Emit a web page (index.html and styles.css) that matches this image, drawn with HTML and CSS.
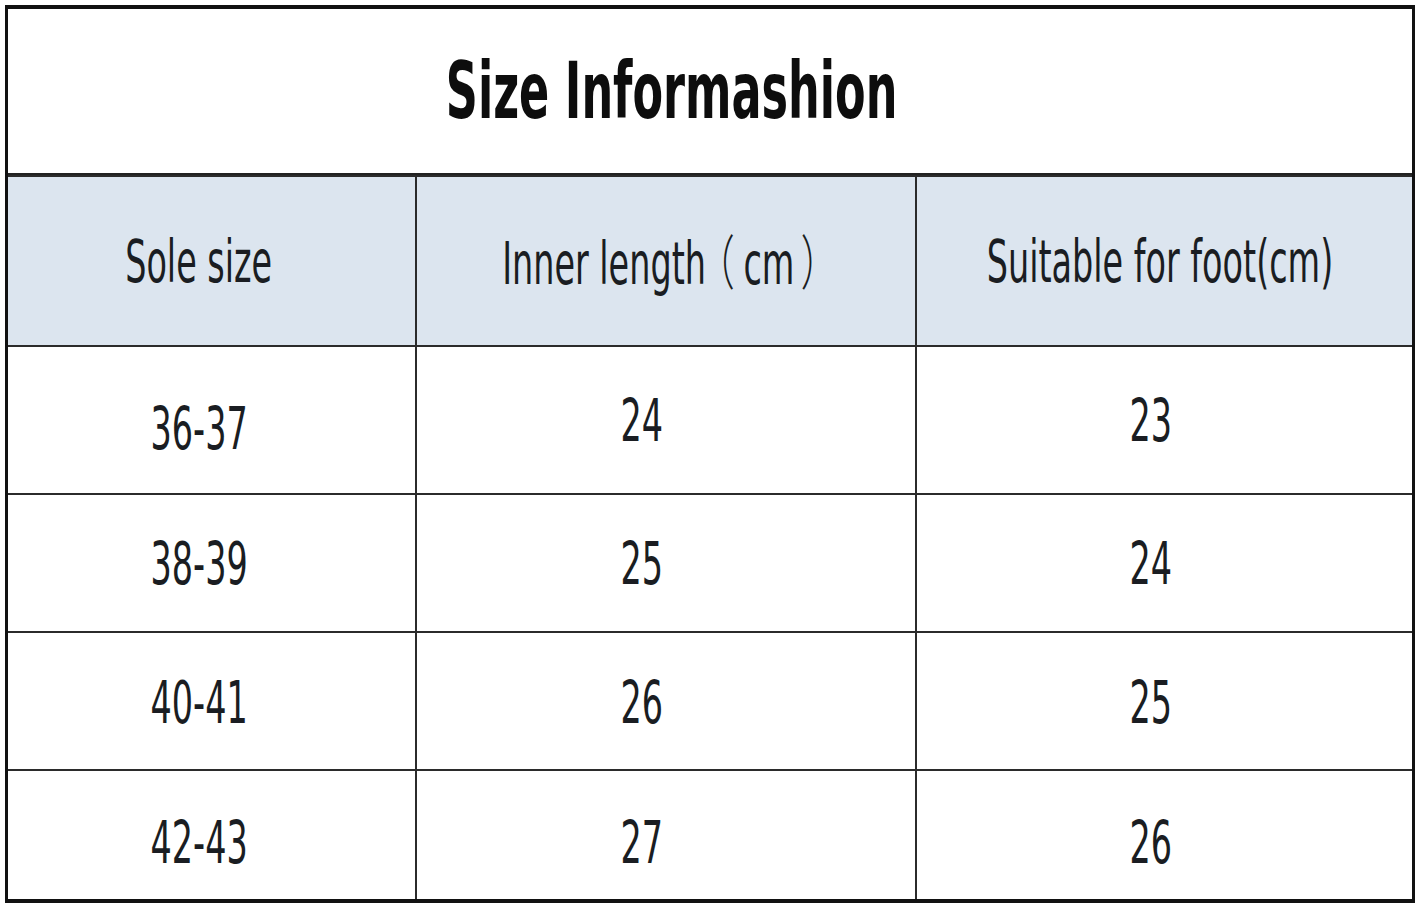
FILE: index.html
```html
<!DOCTYPE html>
<html lang="en">
<head>
<meta charset="utf-8">
<title>Size Informashion</title>
<link rel="stylesheet" href="styles.css">
</head>
<body>
<div class="chart">
  <div class="title-cell"><span class="title">Size Informashion</span></div>

  <div class="head c1"><span class="txt">Sole size</span></div>
  <div class="head c2"><span class="txt">Inner length<span class="fw open">（</span>cm<span class="fw close">）</span></span></div>
  <div class="head c3"><span class="txt">Suitable for foot(cm)</span></div>

  <div class="cell d1 r1 low"><span class="txt">36-37</span></div>
  <div class="cell d2 r1"><span class="txt">24</span></div>
  <div class="cell d3 r1"><span class="txt">23</span></div>

  <div class="cell d1 r2"><span class="txt">38-39</span></div>
  <div class="cell d2 r2"><span class="txt">25</span></div>
  <div class="cell d3 r2"><span class="txt">24</span></div>

  <div class="cell d1 r3"><span class="txt">40-41</span></div>
  <div class="cell d2 r3"><span class="txt">26</span></div>
  <div class="cell d3 r3"><span class="txt">25</span></div>

  <div class="cell d1 r4"><span class="txt">42-43</span></div>
  <div class="cell d2 r4"><span class="txt">27</span></div>
  <div class="cell d3 r4"><span class="txt">26</span></div>
</div>
</body>
</html>
```

FILE: styles.css
```css
html, body {
  margin: 0;
  padding: 0;
  background: #ffffff;
}

body {
  padding: 5px 0 0 5px;
  font-family: "DejaVu Sans Condensed", "DejaVu Sans", "Noto Sans CJK SC", sans-serif;
  color: #141414;
}

.chart {
  box-sizing: border-box;
  width: 1410px;
  height: 898px;
  border-style: solid;
  border-color: #111111;
  border-width: 4px 3px 4px 3px;
  background: #2b2b2b;
  display: grid;
  grid-template-columns: 407px 498px 495px;
  grid-template-rows: 166px 168px 146px 136px 136px 128px;
  gap: 2px;
}

.title-cell {
  grid-column: 1 / 4;
  background: #ffffff;
  border-bottom: 2px solid #222222;
  display: flex;
  align-items: center;
  justify-content: center;
  padding-right: 76px;
}

.title {
  font-size: 78px;
  font-weight: 700;
  color: #0d0d0d;
  line-height: 1;
  white-space: nowrap;
  display: inline-block;
  transform: scaleX(0.635);
}

.head, .cell {
  display: flex;
  align-items: center;
  justify-content: center;
  overflow: visible;
}

.head {
  background: #dce5ef;
}

.cell {
  background: #ffffff;
}

.txt {
  display: inline-block;
  font-size: 59px;
  line-height: 1;
  white-space: nowrap;
  color: #1a1d22;
  transform: scaleX(0.63);
}

.fw {
  font-family: "Noto Sans CJK SC", sans-serif;
  font-weight: 300;
  font-feature-settings: "halt" 1;
}

.fw.open {
  margin-left: 16px;
  margin-right: 14px;
}

.fw.close {
  margin-left: 10px;
}

.head.c1 { padding-right: 26px; }
.head.c2 { padding-right: 10px; }
.head.c3 { padding-right: 10px; }

.cell.d1 { padding-right: 24px; }
.cell.d2 { padding-right: 48px; }
.cell.d3 { padding-right: 28px; }

.cell.r1 { padding-top: 0; }
.cell.r2 { padding-top: 0; }
.cell.r3 { padding-top: 2px; }
.cell.r4 { padding-top: 14px; }
.cell.low { padding-top: 16px; }
```
